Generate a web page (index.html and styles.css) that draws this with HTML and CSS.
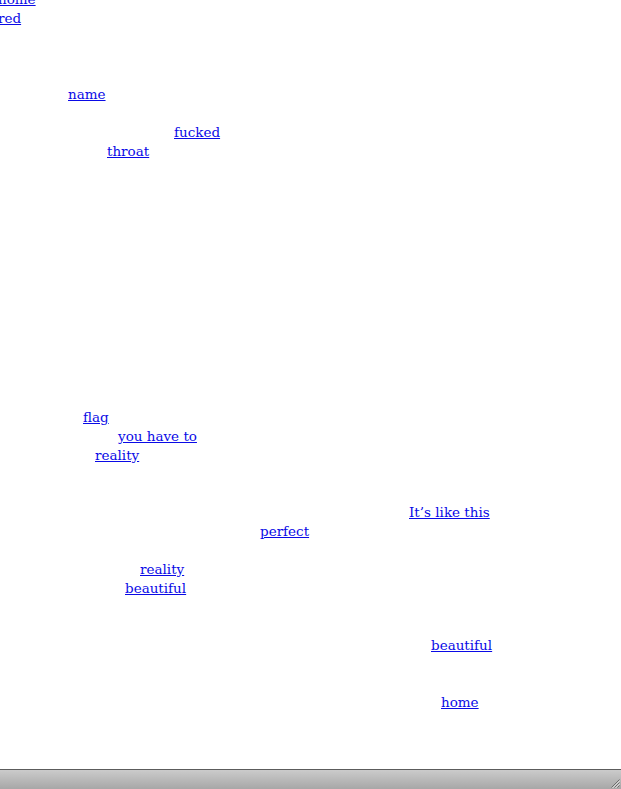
FILE: index.html
```html
<!DOCTYPE html>
<html lang="en">
  <head>
    <meta charset="UTF-8" />
    <meta name="viewport" content="width=device-width, initial-scale=1.0" />
    <title>words</title>
    <link rel="stylesheet" href="styles.css">
  </head>

  <body>
    <div class="words">
      <div class="line x-home-top"><a href="#">home</a></div>
      <div class="line x-red"><a href="#">red</a></div>

      <div class="line skip-3 x-name"><a href="#">name</a></div>

      <div class="line skip-1 x-fucked"><a href="#">fucked</a></div>
      <div class="line x-throat"><a href="#">throat</a></div>

      <div class="line skip-13 x-flag"><a href="#">flag</a></div>
      <div class="line x-have"><a href="#">you have to</a></div>
      <div class="line x-reality"><a href="#">reality</a></div>

      <div class="line skip-2 x-like"><a href="#">It’s like this</a></div>
      <div class="line x-perfect"><a href="#">perfect</a></div>

      <div class="line skip-1 x-reality2"><a href="#">reality</a></div>
      <div class="line x-beautiful"><a href="#">beautiful</a></div>

      <div class="line skip-2 x-beautiful2"><a href="#">beautiful</a></div>

      <div class="line skip-2 x-home"><a href="#">home</a></div>
    </div>

    <div class="statusbar">
      <svg class="grip" width="10" height="10" viewBox="0 0 10 10">
        <path d="M9.5 1.5 L1.5 9.5 M9.5 4.5 L4.5 9.5 M9.5 7.5 L7.5 9.5" stroke="#6b6b6b" stroke-width="1" />
        <path d="M10 2.5 L2.5 10 M10 5.5 L5.5 10" stroke="#e8e8e8" stroke-width="1" />
      </svg>
    </div>
  </body>
</html>
```

FILE: styles.css
```css
html,
body {
  margin: 0;
  height: 100%;
  overflow: hidden;
  background-color: #fff;
}

body {
  font-family: "DejaVu Serif", serif;
  font-size: 13.5px;
}

.words {
  margin-top: -10px;
}

.line {
  height: 19px;
  line-height: 19px;
  white-space: nowrap;
}

a {
  color: #0a0ae6;
  text-decoration: underline;
}

.skip-1 { margin-top: 19px; }
.skip-2 { margin-top: 38px; }
.skip-3 { margin-top: 57px; }
.skip-13 { margin-top: 247px; }

.x-home-top { margin-left: -2px; }
.x-red { margin-left: -2px; }
.x-name { padding-left: 68px; }
.x-fucked { padding-left: 174px; }
.x-throat { padding-left: 107px; }
.x-flag { padding-left: 83px; }
.x-have { padding-left: 118px; }
.x-reality { padding-left: 95px; }
.x-like { padding-left: 409px; }
.x-perfect { padding-left: 260px; }
.x-reality2 { padding-left: 140px; }
.x-beautiful { padding-left: 125px; }
.x-beautiful2 { padding-left: 431px; }
.x-home { padding-left: 441px; }

.statusbar {
  position: fixed;
  left: 0;
  right: 0;
  bottom: 0;
  height: 19px;
  border-top: 1px solid #5c5c5c;
  background: linear-gradient(#cbcbcb, #a7a7a7);
}

.grip {
  position: absolute;
  right: 1px;
  bottom: 1px;
}
```
